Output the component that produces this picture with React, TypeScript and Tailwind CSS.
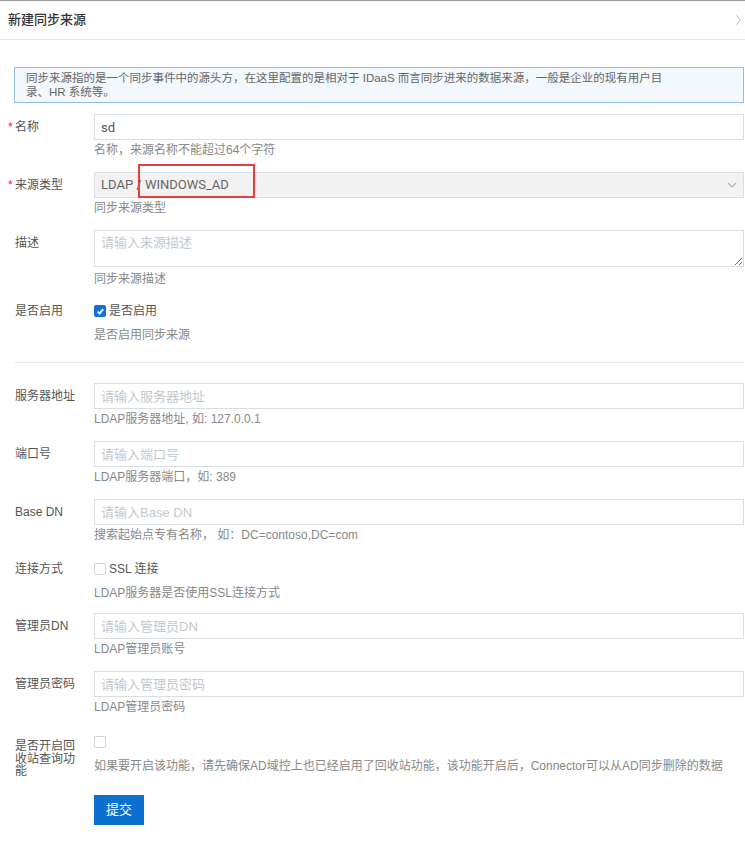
import React from 'react'

const FONT = { fontFamily: '"Liberation Sans", "Noto Sans CJK SC", sans-serif' }
const VALUE_FONT = { fontFamily: 'Roboto, "Noto Sans CJK SC", sans-serif' }

function Label({ text, required }: { text: string; required?: boolean }) {
  return (
    <div className="relative pl-[15px] pr-[14px] text-[12px] leading-[26px] text-[#555]">
      {required && <span className="absolute left-[8px] top-0 text-[#f5222d]">*</span>}
      {text}
    </div>
  )
}

function Help({ children }: { children: React.ReactNode }) {
  return <div className="relative top-[1px] text-[12px] leading-[18px] text-[#888]">{children}</div>
}

function Input({ value, placeholder }: { value?: string; placeholder?: string }) {
  return (
    <input
      defaultValue={value}
      placeholder={placeholder}
      className="block w-full h-[26px] border border-[#d9dee5] px-[6px] text-[13px] text-[#555] placeholder:text-[#c3c8d0] outline-none"
      style={FONT}
    />
  )
}

function TextRow({ label, placeholder, help }: { label: string; placeholder: string; help: string }) {
  return (
    <div className="grid grid-cols-[94px_1fr] pb-[14px]">
      <Label text={label} />
      <div>
        <Input placeholder={placeholder} />
        <Help>{help}</Help>
      </div>
    </div>
  )
}

function Check({ checked }: { checked?: boolean }) {
  return checked ? (
    <span className="w-[12px] h-[12px] rounded-[2px] bg-[#1570d6] flex items-center justify-center">
      <svg width="9" height="9" viewBox="0 0 10 10" fill="none" stroke="white" strokeWidth="2">
        <path d="M2 5.2l2 2.2 4-5" />
      </svg>
    </span>
  ) : (
    <span className="w-[12px] h-[12px] rounded-[2px] border border-[#cfd4da] bg-white" />
  )
}

export default function App() {
  return (
    <div className="w-[745px] h-[852px] overflow-hidden bg-white border-t border-[#9a9a9a]" style={FONT}>
      {/* header */}
      <div className="h-[39px] border-b border-[#e6e8eb] flex items-center justify-between pl-[8px] pr-[4px]">
        <span className="text-[13px] text-[#333] font-medium">新建同步来源</span>
        <svg width="5" height="10" viewBox="0 0 5 10" fill="none" stroke="#b5b5b5" strokeWidth="1">
          <path d="M0.5 0.5L4.5 5 0.5 9.5" />
        </svg>
      </div>

      <div className="pl-[14px] pr-[1px] pt-[27px] pb-[11px]">
        <div className="border border-[#8dbde8] bg-[#f3f8fc] pl-[11px] pr-[70px] py-[3px] text-[11.5px] leading-[14px] text-[#666]">
          同步来源指的是一个同步事件中的源头方，在这里配置的是相对于 IDaaS 而言同步进来的数据来源，一般是企业的现有用户目录、HR 系统等。
        </div>
      </div>

      <div className="pr-[1px]">
        {/* 名称 */}
        <div className="grid grid-cols-[94px_1fr] pb-[14px]">
          <Label text="名称" required />
          <div>
            <input
              defaultValue="sd"
              className="block w-full h-[26px] border border-[#d9dee5] px-[6px] text-[13px] text-[#555] outline-none"
              style={VALUE_FONT}
            />
            <Help>名称，来源名称不能超过64个字符</Help>
          </div>
        </div>

        {/* 来源类型 */}
        <div className="grid grid-cols-[94px_1fr] pb-[14px]">
          <Label text="来源类型" required />
          <div className="relative">
            <div
              className="h-[26px] border border-[#d9dee5] bg-[#f2f2f2] flex items-center justify-between pl-[6px] pr-[6px] text-[13px] text-[#666]"
              style={VALUE_FONT}
            >
              <span>LDAP / WINDOWS_AD</span>
              <svg width="10" height="6" viewBox="0 0 10 6" fill="none" stroke="#a9b0ba" strokeWidth="1.2">
                <path d="M1 1l4 4 4-4" />
              </svg>
            </div>
            <Help>同步来源类型</Help>
            <div className="absolute left-[44px] top-[-8px] w-[117px] h-[34px] border-2 border-[#ef3b3b]" />
          </div>
        </div>

        {/* 描述 */}
        <div className="grid grid-cols-[94px_1fr] pb-[14px]">
          <Label text="描述" />
          <div>
            <textarea
              placeholder="请输入来源描述"
              className="block w-full h-[37px] border border-[#d9dee5] px-[6px] py-[3px] text-[13px] leading-[18px] placeholder:text-[#c3c8d0] outline-none resize-y"
              style={FONT}
            />
            <div className="pt-[2px]">
              <Help>同步来源描述</Help>
            </div>
          </div>
        </div>

        {/* 是否启用 */}
        <div className="grid grid-cols-[94px_1fr]">
          <div className="relative pl-[15px] text-[12px] leading-[20px] text-[#555]">是否启用</div>
          <div>
            <div className="h-[20px] flex items-center gap-[3px] text-[12px] text-[#555]">
              <Check checked />
              <span>是否启用</span>
            </div>
            <div className="pt-[4px]">
              <Help>是否启用同步来源</Help>
            </div>
          </div>
        </div>

        <div className="ml-[14px] mt-[19px] mb-[20px] border-t border-[#e6e8eb]" />

        <TextRow label="服务器地址" placeholder="请输入服务器地址" help="LDAP服务器地址, 如: 127.0.0.1" />
        <TextRow label="端口号" placeholder="请输入端口号" help="LDAP服务器端口，如: 389" />
        <TextRow label="Base DN" placeholder="请输入Base DN" help="搜索起始点专有名称， 如：DC=contoso,DC=com" />

        {/* 连接方式 */}
        <div className="grid grid-cols-[94px_1fr] pt-[2px] pb-[12px]">
          <div className="pl-[15px] text-[12px] leading-[20px] text-[#555]">连接方式</div>
          <div>
            <div className="h-[20px] flex items-center gap-[3px] text-[12px] text-[#555]">
              <Check />
              <span>SSL 连接</span>
            </div>
            <div className="pt-[4px]">
              <Help>LDAP服务器是否使用SSL连接方式</Help>
            </div>
          </div>
        </div>

        <TextRow label="管理员DN" placeholder="请输入管理员DN" help="LDAP管理员账号" />
        <TextRow label="管理员密码" placeholder="请输入管理员密码" help="LDAP管理员密码" />

        {/* 回收站 */}
        <div className="grid grid-cols-[94px_1fr] pt-[3px]">
          <div className="pl-[15px] pr-[14px] pt-[8px] text-[12px] leading-[12.5px] text-[#555]">是否开启回收站查询功能</div>
          <div>
            <div className="h-[20px] flex items-center">
              <Check />
            </div>
            <div className="pt-[4px]">
              <Help>如果要开启该功能，请先确保AD域控上也已经启用了回收站功能，该功能开启后，Connector可以从AD同步删除的数据</Help>
            </div>
          </div>
        </div>

        <div className="pl-[94px] pt-[17px]">
          <button className="w-[50px] h-[30px] bg-[#0b70d0] text-white text-[13px]">提交</button>
        </div>
      </div>
    </div>
  )
}
